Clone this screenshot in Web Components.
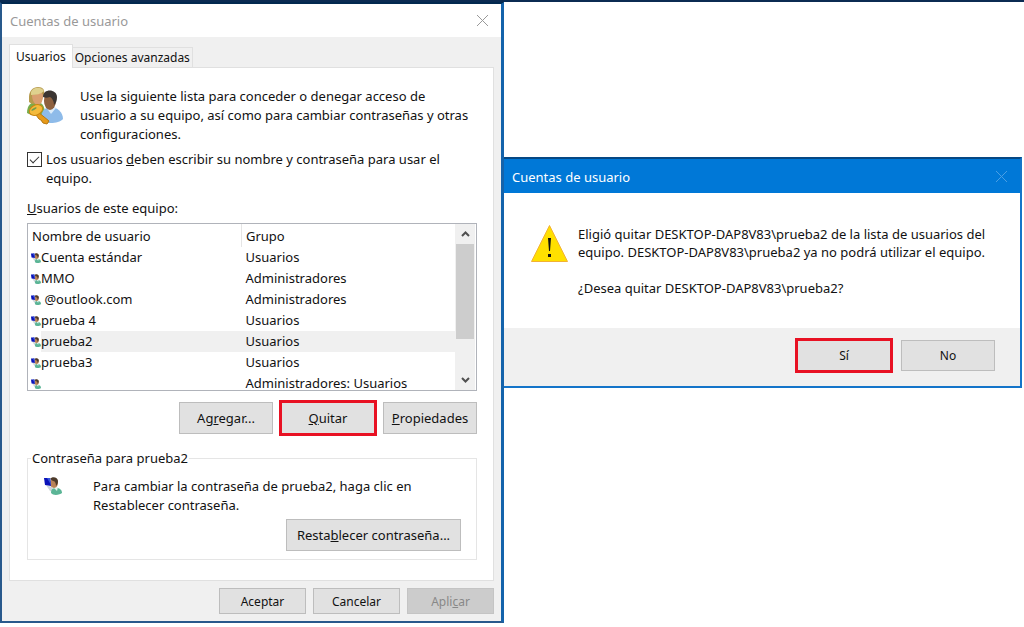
<!DOCTYPE html>
<html lang="es">
<head>
<meta charset="utf-8">
<title>Cuentas de usuario</title>
<style>
  body {
    margin: 0;
    background: #fff;
    color: #111;
    font-family: "Noto Sans", "Open Sans", sans-serif;
    font-size: 13px;
    line-height: 19px;
  }
</style>
</head>
<body>
<win-desktop>
  <win-dialog slot="main" caption="Cuentas de usuario">
    <user-accounts></user-accounts>
  </win-dialog>
  <win-dialog slot="prompt" caption="Cuentas de usuario" active>
    <confirm-removal account="DESKTOP-DAP8V83\prueba2"></confirm-removal>
  </win-dialog>
</win-desktop>

<script>
function makeTemplate(html) {
  const template = document.createElement("template");
  template.innerHTML = html;
  return template;
}

class WinElement extends HTMLElement {
  constructor() {
    super();
    this.attachShadow({ mode: "open" });
    this.shadowRoot.appendChild(this.constructor.template.content.cloneNode(true));
  }
}

class WinDesktop extends WinElement {
  static template = makeTemplate(`
    <style>
      :host {
        display: grid;
        grid-template-columns: 504fr 520fr;
        align-items: start;
        border-top: 2px solid #0b2b52;
      }
      .prompt {
        padding: 155px 2px 0 0;
      }
    </style>
    <slot name="main"></slot>
    <div class="prompt"><slot name="prompt"></slot></div>
  `);
}
customElements.define("win-desktop", WinDesktop);

class WinDialog extends WinElement {
  static template = makeTemplate(`
    <style>
      :host {
        display: block;
        border: 2px solid #28598c;
        border-top-color: #02294f;
        border-right: 3px solid #1463ab;
        background: #f0f0f0;
      }
      :host([active]) {
        border: 2px solid #1474c9;
        border-left-width: 0;
        border-top-color: #064884;
      }
      header {
        display: flex;
        align-items: center;
        justify-content: space-between;
        height: 33px;
        padding: 0 12px 0 8px;
        background: #fff;
        color: #999;
      }
      :host([active]) header {
        height: 34px;
        background: #0078d7;
        color: #fff;
      }
      h1 {
        margin: 0;
        padding-top: 2px;
        font-size: 13px;
        font-weight: 400;
      }
      button {
        display: flex;
        padding: 0;
        border: 0;
        background: none;
        color: #999;
      }
      :host([active]) button {
        color: #4a9fe4;
      }
    </style>
    <header>
      <h1></h1>
      <button type="button" aria-label="Cerrar">
        <svg width="13" height="13" viewBox="0 0 13 13" fill="none" stroke="currentColor"><path d="M1 1l11 11M12 1L1 12"/></svg>
      </button>
    </header>
    <slot></slot>
  `);

  connectedCallback() {
    this.shadowRoot.querySelector("h1").textContent = this.getAttribute("caption");
  }
}
customElements.define("win-dialog", WinDialog);

class WinButton extends WinElement {
  static template = makeTemplate(`
    <style>
      :host {
        display: block;
        width: var(--button-width, 94px);
        height: var(--button-height, 32px);
      }
      button {
        box-sizing: border-box;
        width: 100%;
        height: 100%;
        padding: 0;
        border: 1px solid #bdbdbd;
        background: #e1e1e1;
        color: #111;
        font: inherit;
        white-space: nowrap;
      }
      button:disabled {
        border-color: #c4c4c4;
        background: #ccc;
        color: #888;
      }
      :host([marked]) {
        outline: 3px solid #e81123;
        outline-offset: -1px;
      }
    </style>
    <button type="button"><slot></slot></button>
  `);

  connectedCallback() {
    this.shadowRoot.querySelector("button").disabled = this.hasAttribute("disabled");
  }
}
customElements.define("win-button", WinButton);

class UserIcon extends WinElement {
  static template = makeTemplate(`
    <style>
      :host {
        display: block;
        width: var(--icon-size, 10px);
        height: var(--icon-size, 10px);
      }
      svg {
        display: block;
        width: 100%;
        height: 100%;
      }
    </style>
    <svg viewBox="0 0 18 18">
      <path d="M2 8l6 2 3 6-5-2z" fill="#cdd5da"/>
      <path d="M7 16c0-4 2-5 5-5 4 0 6 2 6 5-2 2-9 3-11 0z" fill="#5bb596"/>
      <path d="M9 10l4 4 1-4z" fill="#e6f3ee"/>
      <ellipse cx="10" cy="6" rx="4" ry="5" fill="#b98258"/>
      <path d="M6 2c2-3 8-2 8 2 0 2-1 4-2 5 0-3-1-5-3-5z" fill="#4d3a2a"/>
      <path d="M0 1l6 0 1 8-6-1z" fill="#0a12b8"/>
      <path d="M3 1h3l1 7z" fill="#3757dd"/>
    </svg>
  `);
}
customElements.define("user-icon", UserIcon);

class UserList extends WinElement {
  static template = makeTemplate(`
    <style>
      :host {
        display: flex;
        height: 166px;
        padding-right: 1px;
        overflow: hidden;
        border: 1px solid #b0b3ba;
        background: #fff;
      }
      .rows {
        flex: 1;
        overflow: hidden;
      }
      table {
        width: 100%;
        table-layout: fixed;
        border-collapse: collapse;
        text-align: left;
      }
      th, td {
        height: 21px;
        padding: 0;
        font-weight: 400;
        line-height: 19px;
        white-space: nowrap;
      }
      th {
        height: 22px;
        padding: 1px 0 0 4px;
      }
      th:first-child {
        width: 50%;
        box-sizing: border-box;
        border-right: 1px solid #e5e5e5;
      }
      td + td {
        padding-left: 4px;
      }
      .name {
        display: flex;
        align-items: center;
        padding-left: 3px;
      }
      .name span {
        flex: 1;
        line-height: 21px;
        min-height: 21px;
        white-space: pre;
      }
      .selected span, .selected td + td {
        background: #f0f0f0;
      }
      .scroll {
        display: flex;
        flex-direction: column;
        width: 20px;
        background: #f0f0f0;
      }
      .scroll button {
        display: grid;
        place-items: center;
        height: 20px;
        padding: 0;
        border: 0;
        background: none;
      }
      .track {
        flex: 1;
      }
      .thumb {
        width: 18px;
        height: 75%;
        margin: 0 auto;
        background: #cdcdcd;
      }
    </style>
    <div class="rows">
      <table aria-label="Usuarios de este equipo">
        <thead><tr><th>Nombre de usuario</th><th>Grupo</th></tr></thead>
        <tbody></tbody>
      </table>
    </div>
    <div class="scroll">
      <button type="button" aria-label="Subir">
        <svg width="9" height="6" viewBox="0 0 9 6" fill="none" stroke="#505050" stroke-width="2"><path d="M1 5l3.500-3.500L8 5"/></svg>
      </button>
      <div class="track"><div class="thumb"></div></div>
      <button type="button" aria-label="Bajar">
        <svg width="9" height="6" viewBox="0 0 9 6" fill="none" stroke="#505050" stroke-width="2"><path d="M1 1l3.500 3.500L8 1"/></svg>
      </button>
    </div>
  `);

  connectedCallback() {
    const users = [
      ["Cuenta estándar", "Usuarios"],
      ["MMO", "Administradores"],
      [" @outlook.com", "Administradores"],
      ["prueba 4", "Usuarios"],
      ["prueba2", "Usuarios"],
      ["prueba3", "Usuarios"],
      ["", "Administradores: Usuarios"]
    ];
    this.shadowRoot.querySelector("tbody").innerHTML = users.map(([name, group]) => `
      <tr class="${name === "prueba2" ? "selected" : ""}">
        <td><div class="name"><user-icon></user-icon><span>${name}</span></div></td>
        <td>${group}</td>
      </tr>`).join("");
  }
}
customElements.define("user-list", UserList);

class UserAccounts extends WinElement {
  static template = makeTemplate(`
    <style>
      :host {
        display: block;
        padding: 7px;
      }
      p {
        margin: 0;
      }
      nav {
        display: flex;
        align-items: flex-end;
        font-size: 12px;
      }
      nav button {
        height: 20px;
        padding: 0 2px;
        border: 1px solid #e0e0e0;
        border-left: 0;
        border-bottom: 0;
        background: #f0f0f0;
        color: #111;
        font: inherit;
      }
      nav button[aria-selected="true"] {
        height: 24px;
        padding: 0 6px;
        margin-bottom: -1px;
        border: 1px solid #e0e0e0;
        border-bottom: 0;
        background: #fff;
      }
      .panel {
        padding: 19px 16px 20px 17px;
        border: 1px solid #e0e0e0;
        background: #fff;
      }
      .intro {
        display: flex;
        gap: 16px;
      }
      .intro svg {
        flex: none;
      }
      .require {
        display: flex;
        gap: 4px;
        margin: 6px 0 11px;
      }
      .require span {
        max-width: 410px;
      }
      input {
        appearance: none;
        flex: none;
        width: 15px;
        height: 15px;
        margin: 2px 0 0;
        border: 1px solid #333;
        display: grid;
        place-items: center;
      }
      input:checked::before {
        content: "";
        width: 8px;
        height: 4px;
        border: solid #333;
        border-width: 0 0 1px 1px;
        rotate: -45deg;
        translate: 0 -1px;
      }
      user-list {
        margin-top: 5px;
      }
      .actions {
        display: flex;
        justify-content: flex-end;
        gap: 8px;
        margin-top: 11px;
      }
      fieldset {
        display: flex;
        flex-direction: column;
        min-width: 0;
        margin: 15px 0 0;
        padding: 9px 15px 8px 16px;
        border: 1px solid #e5e5e5;
      }
      legend {
        margin-left: -13px;
        padding: 0 1px;
      }
      .reset {
        display: flex;
        gap: 31px;
      }
      .reset p {
        max-width: 330px;
      }
      .reset user-icon {
        --icon-size: 18px;
      }
      fieldset win-button {
        --button-width: 175px;
        align-self: flex-end;
        margin-top: 4px;
      }
      footer {
        --button-width: 87px;
        --button-height: 26px;
        display: flex;
        justify-content: flex-end;
        gap: 7px;
        margin-top: 7px;
        font-size: 12px;
      }
    </style>
    <nav role="tablist">
      <button type="button" role="tab" aria-selected="true">Usuarios</button>
      <button type="button" role="tab" aria-selected="false">Opciones avanzadas</button>
    </nav>
    <section class="panel">
      <div class="intro">
        <svg width="37" height="38" viewBox="0 0 37 38">
          <path d="M0 26c0-8 4-11 10-11 5 0 8 4 8 12-5 2-14 2-18-1z" fill="#78ad4c"/>
          <path d="M2 10C2 4 6 0 11 0s7 3 6 7l-3 9-9 1-3-2z" fill="#b69a4d"/>
          <path d="M5 8c4 0 7-2 9-3l2 3c0 6-2 10-5 10s-6-4-6-10z" fill="#d99f70"/>
          <path d="M4 5c2-5 10-6 13-1-3 3-8 4-13 4z" fill="#dfd18e"/>
          <path d="M14 32c0-8 4-12 10-12s12 5 12 12c-4 5-17 5-22 2z" fill="#8ebbe9"/>
          <path d="M19 20l5 7 5-6-3-3z" fill="#dcecfa"/>
          <ellipse cx="23" cy="14" rx="6" ry="9" fill="#8e613f"/>
          <path d="M16 10c0-9 14-8 14 0 0 4-1 6-3 8 0-4-2-7-4-8-3 1-5 1-7 0z" fill="#3b3532"/>
          <path d="M11 25l11 9-2 3-4-1-2-3-2-1-3-4z" fill="#e79a19" stroke="#b8780e"/>
          <ellipse cx="9" cy="23" rx="7" ry="5" fill="#f4ba3b" stroke="#c98612" transform="rotate(-25 9 23)"/>
          <ellipse cx="7" cy="22" rx="3" ry="1" fill="#719d4a" transform="rotate(-30 7 22)"/>
        </svg>
        <p>Use la siguiente lista para conceder o denegar acceso de<br>usuario a su equipo, así como para cambiar contraseñas y otras<br>configuraciones.</p>
      </div>
      <label class="require">
        <input type="checkbox" checked>
        <span>Los usuarios <u>d</u>eben escribir su nombre y contraseña para usar el equipo.</span>
      </label>
      <p><u>U</u>suarios de este equipo:</p>
      <user-list></user-list>
      <div class="actions">
        <win-button>Ag<u>r</u>egar...</win-button>
        <win-button marked><u>Q</u>uitar</win-button>
        <win-button><u>P</u>ropiedades</win-button>
      </div>
      <fieldset>
        <legend>Contraseña para prueba2</legend>
        <div class="reset">
          <user-icon></user-icon>
          <p>Para cambiar la contraseña de prueba2, haga clic en Restablecer contraseña.</p>
        </div>
        <win-button>Resta<u>b</u>lecer contraseña...</win-button>
      </fieldset>
    </section>
    <footer>
      <win-button>Aceptar</win-button>
      <win-button>Cancelar</win-button>
      <win-button disabled>Apli<u>c</u>ar</win-button>
    </footer>
  `);
}
customElements.define("user-accounts", UserAccounts);

class ConfirmRemoval extends WinElement {
  static template = makeTemplate(`
    <style>
      :host {
        display: block;
        line-height: 18px;
      }
      .message {
        display: flex;
        gap: 10px;
        padding: 32px 27px 31px;
        background: #fff;
      }
      svg {
        flex: none;
      }
      p {
        margin: 0;
      }
      p + p {
        margin-top: 18px;
      }
      footer {
        display: flex;
        justify-content: flex-end;
        gap: 10px;
        padding: 12px 25px 15px;
        font-size: 12px;
        --button-height: 31px;
      }
    </style>
    <div class="message">
      <svg width="37" height="37" viewBox="0 0 37 37">
        <path d="M18.500 0.500L36.500 36.500H0.500z" fill="#ffe000" stroke="#f2b233"/>
        <path d="M17 13h3l-1 13h-1zM17 29h3v3h-3z" fill="#111"/>
      </svg>
      <div>
        <p>Eligió quitar <span></span> de la lista de usuarios del<br>equipo. <span></span> ya no podrá utilizar el equipo.</p>
        <p>¿Desea quitar <span></span>?</p>
      </div>
    </div>
    <footer>
      <win-button marked>Sí</win-button>
      <win-button>No</win-button>
    </footer>
  `);

  connectedCallback() {
    for (const span of this.shadowRoot.querySelectorAll("span")) {
      span.textContent = this.getAttribute("account");
    }
  }
}
customElements.define("confirm-removal", ConfirmRemoval);
</script>
</body>
</html>
